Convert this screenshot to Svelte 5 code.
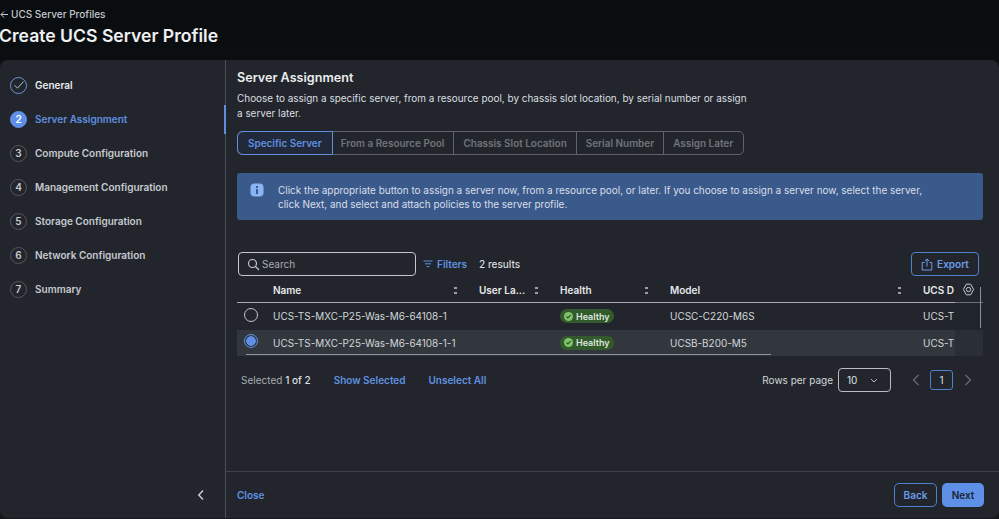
<script>
  const steps = [
    ['2', 'Server Assignment', 'active'],
    ['3', 'Compute Configuration', ''],
    ['4', 'Management Configuration', ''],
    ['5', 'Storage Configuration', ''],
    ['6', 'Network Configuration', ''],
    ['7', 'Summary', '']
  ];
  const tabs = ['Specific Server', 'From a Resource Pool', 'Chassis Slot Location', 'Serial Number', 'Assign Later'];
  const rows = [
    { name: 'UCS-TS-MXC-P25-Was-M6-64108-1', model: 'UCSC-C220-M6S', sel: false },
    { name: 'UCS-TS-MXC-P25-Was-M6-64108-1-1', model: 'UCSB-B200-M5', sel: true }
  ];
</script>

<div class="page">
  <header class="top">
    <div class="crumb"><svg width="9" height="9" viewBox="0 0 9 9"><path d="M8 4.5H1.2M4 1.5L1 4.5l3 3" fill="none" stroke="#c8ccd0" stroke-width="1"/></svg><span>UCS Server Profiles</span></div>
    <h1>Create UCS Server Profile</h1>
  </header>

  <div class="card">
    <aside class="side">
      <nav class="steps">
        <div class="step done">
          <span class="dot"><svg width="12" height="10" viewBox="0 0 12 10"><path d="M1.5 5.2L4.5 8.2L10.5 1.5" fill="none" stroke="#b6c2d4" stroke-width="1"/></svg></span>
          <span>General</span>
        </div>
        {#each steps as s}
          <div class="step {s[2]}"><span class="dot">{s[0]}</span><span>{s[1]}</span></div>
        {/each}
      </nav>
      <div class="collapse"><svg width="8" height="12" viewBox="0 0 8 12"><path d="M6 1.5L1.8 6L6 10.5" fill="none" stroke="#c8ccd0" stroke-width="1.5"/></svg></div>
      <i class="marker"></i>
    </aside>

    <main class="main">
      <div class="body">
        <h2>Server Assignment</h2>
        <p class="lead">Choose to assign a specific server, from a resource pool, by chassis slot location, by serial number or assign a server later.</p>

        <div class="tabs">
          {#each tabs as t, i}
            <button class:on={i === 0}>{t}</button>
          {/each}
        </div>

        <div class="info">
          <svg class="info-i" width="14" height="14" viewBox="0 0 14 14"><rect x="0.5" y="0.5" width="13" height="13" rx="4" fill="#8ab4f2"/><rect x="6" y="6" width="2" height="5" fill="#3c5c8f"/><rect x="6" y="3" width="2" height="2" fill="#3c5c8f"/></svg>
          <div class="info-text">Click the appropriate button to assign a server now, from a resource pool, or later. If you choose to assign a server now, select the server, click Next, and select and attach policies to the server profile.</div>
        </div>

        <div class="toolbar">
          <div class="search">
            <svg width="13" height="13" viewBox="0 0 13 13"><circle cx="5.5" cy="5.5" r="4" fill="none" stroke="#c8ccd0" stroke-width="1.1"/><path d="M8.5 8.5L12 12" stroke="#c8ccd0" stroke-width="1.1"/></svg>
            <span>Search</span>
          </div>
          <div class="filters">
            <svg width="10" height="8" viewBox="0 0 10 8"><path d="M0.5 1h9M2 3.8h6M3.6 6.6h2.8" stroke="#5b8ee0" stroke-width="1"/></svg>
            <span>Filters</span>
          </div>
          <span class="count">2 results</span>
          <button class="export">
            <svg width="12" height="13" viewBox="0 0 12 13"><path d="M3.5 4.5H1.2v7.5h9.6V4.5H8.5M6 8.5V1M3.8 3L6 1l2.2 2" fill="none" stroke="#6a9be8" stroke-width="1"/></svg>
            <span>Export</span>
          </button>
        </div>

        <div class="table">
          <div class="row head">
            <span class="c-sel"></span>
            <span class="c-name">Name<em class="sort"></em></span>
            <span class="c-label">User La...<em class="sort"></em></span>
            <span class="c-health">Health<em class="sort"></em></span>
            <span class="c-model">Model<em class="sort"></em></span>
            <span class="c-dom">UCS D</span>
          </div>
          {#each rows as r}
            <div class="row item" class:sel={r.sel}>
              <span class="c-sel"><i class="radio" class:checked={r.sel}></i></span>
              <span class="c-name">{r.name}</span>
              <span class="c-label"></span>
              <span class="c-health"><span class="badge"><svg width="9" height="9" viewBox="0 0 9 9"><circle cx="4.5" cy="4.5" r="4.5" fill="#7fc36a"/><path d="M2.5 4.6l1.4 1.4 2.6-2.8" fill="none" stroke="#25471f" stroke-width="1.1"/></svg>Healthy</span></span>
              <span class="c-model">{r.model}</span>
              <span class="c-dom">UCS-T</span>
            </div>
          {/each}
          <i class="shade"></i>
          <svg class="gear" width="13" height="13" viewBox="0 0 13 13"><path d="M4.3 1.2h4.4l2.9 5.3-2.9 5.3H4.3L1.4 6.5z" fill="none" stroke="#c8ccd0" stroke-width="1"/><circle cx="6.5" cy="6.5" r="2.2" fill="none" stroke="#c8ccd0" stroke-width="1"/></svg>
          <i class="vscroll"></i>
          <i class="hscroll"></i>
        </div>

        <div class="pager">
          <span class="selected">Selected <b>1 of 2</b></span>
          <a class="link first">Show Selected</a>
          <a class="link">Unselect All</a>
          <span class="rpp">Rows per page</span>
          <div class="select"><span>10</span><svg width="8" height="5" viewBox="0 0 8 5"><path d="M1 1l3 3 3-3" fill="none" stroke="#b4b9be" stroke-width="1"/></svg></div>
          <svg class="arr" width="8" height="12" viewBox="0 0 8 12"><path d="M6.5 1L1.5 6l5 5" fill="none" stroke="#666c73" stroke-width="1.2"/></svg>
          <span class="page-no">1</span>
          <svg class="arr" width="8" height="12" viewBox="0 0 8 12"><path d="M1.5 1l5 5-5 5" fill="none" stroke="#666c73" stroke-width="1.2"/></svg>
        </div>
      </div>

      <footer class="foot">
        <a class="close">Close</a>
        <button class="back">Back</button>
        <button class="next">Next</button>
      </footer>
    </main>
  </div>
</div>

<style>
  :global(body) { margin: 0; background: #0d1013; }
  .page {
    width: 999px; height: 519px; overflow: hidden; display: flex; flex-direction: column;
    font-family: Inter, "Liberation Sans", sans-serif; color: #e3e5e8; font-size: 10px;
    background: linear-gradient(#0a0d10, #14171b);
  }
  .top { height: 60px; flex: none; box-sizing: border-box; padding-top: 8px; }
  .crumb { display: flex; align-items: center; gap: 2px; font-size: 10px; line-height: 13px; color: #c4c8cc; font-weight: 500; }
  h1 { margin: 3px 0 0 -1px; font-size: 17.6px; line-height: 24px; font-weight: 600; color: #eef0f2; letter-spacing: 0; }
  .card { flex: 1; display: flex; background: #22262c; border-radius: 8px; min-height: 0; margin-bottom: 1px; }
  .side { width: 225px; flex: none; position: relative; border-right: 1px solid #4a4f55; display: flex; flex-direction: column; }
  .steps { padding: 16px 0 0 10px; display: flex; flex-direction: column; gap: 16px; }
  .step { display: flex; align-items: center; gap: 8px; height: 18px; font-size: 10px; font-weight: 600; color: #c6cacf; }
  .step.done { color: #e9ebee; }
  .step.active { color: #5f90e0; }
  .dot {
    width: 15px; height: 15px; border-radius: 50%; border: 1px solid #53585f; display: flex; align-items: center; justify-content: center;
    font-size: 10px; font-weight: 600; color: #c6cacf; flex: none;
  }
  .done .dot { border-color: #6b93d2; }
  .active .dot { background: #5f90e8; border-color: #5f90e8; color: #fff; }
  .collapse { margin-top: auto; margin-bottom: 17px; display: flex; justify-content: flex-end; padding-right: 20px; }
  .marker { position: absolute; right: -1px; top: 45px; width: 2px; height: 29px; background: #5f8fdc; }

  .main { flex: 1; display: flex; flex-direction: column; min-width: 0; }
  .body { flex: 1; padding: 9px 16px 0 11px; min-height: 0; }
  h2 { margin: 0; font-size: 12.6px; line-height: 17px; font-weight: 600; color: #eceef0; }
  .lead { margin: 5px 0 0; width: 514px; font-size: 9.95px; line-height: 15px; color: #dcdfe2; }
  .tabs { display: flex; margin-top: 10px; height: 24px; width: max-content; box-sizing: border-box; border: 1px solid #5e6369; border-radius: 5px; }
  .tabs button {
    background: none; border: 0; border-right: 1px solid #5e6369; font: 600 9.95px Inter, "Liberation Sans", sans-serif; color: #6f747a; padding: 0 9px; white-space: nowrap;
  }
  .tabs button:last-child { border-right: 0; padding-right: 10px; }
  .tabs button.on { color: #5f90e0; outline: 1px solid #5f8fdc; border-radius: 5px 0 0 5px; border-right: 0; padding: 0 10px; background: #22293a; }
  .info {
    margin-top: 18px; height: 47px; box-sizing: border-box; background: #3b5a8c; border-radius: 3px; display: flex; gap: 14px; padding: 10px 14px 10px 13px;
    font-size: 9.95px; line-height: 14px; color: #d9dfe8; width: 746px;
  }
  .info-i { flex: none; }
  .info-text { width: 660px; }
  .toolbar { display: flex; align-items: center; margin-top: 32px; height: 24px; }
  .search { width: 178px; height: 24px; box-sizing: border-box; border: 1px solid #c4c8cc; border-radius: 4px; display: flex; align-items: center; gap: 2px; padding: 0 8px; color: #a6abb1; margin-left: 1px; }
  .filters { display: flex; align-items: center; gap: 4px; margin-left: 7px; color: #5f90e0; font-weight: 600; }
  .count { margin-left: 12px; color: #d8dbdf; font-weight: 500; }
  .export {
    margin-left: auto; width: 68px; height: 24px; border: 1px solid #4f80cc; border-radius: 4px; background: none; color: #6a9be8;
    font: 600 10px Inter, "Liberation Sans", sans-serif; display: flex; align-items: center; justify-content: center; gap: 4px; padding: 0; margin-right: 4px;
  }
  .table { position: relative; margin-top: 2px; width: 746px; overflow: hidden; font-size: 9.95px; }
  .row { display: flex; align-items: center; white-space: nowrap; }
  .head { height: 25px; box-sizing: border-box; font-weight: 600; color: #e6e8eb; border-bottom: 1px solid #a9adb1; font-size: 10px; }
  .item { height: 26.5px; color: #d3d6da; box-sizing: border-box; }
  .item.sel { background: #32373d; }
  .row > span { display: block; position: relative; flex: none; box-sizing: border-box; }
  .c-sel { width: 36px; }
  .c-name { width: 206px; }
  .c-label { width: 81px; }
  .c-health { width: 110px; }
  .c-model { width: 253px; }
  .c-dom { width: 60px; }
  .sort { position: absolute; top: 50%; margin-top: -3px; right: 22px; width: 3px; height: 7px;
    background: linear-gradient(#9ba0a6 0 2px, transparent 2px 5px, #9ba0a6 5px); }
  .radio { display: block; margin: -3px 0 0 7px; width: 14px; height: 14px; box-sizing: border-box; border-radius: 50%; border: 1px solid #c2c6ca; }
  .radio.checked { border-color: #5f90e8; background: radial-gradient(circle, #5f90e8 0 4.5px, transparent 5px); }
  .badge { display: inline-flex; align-items: center; gap: 3px; height: 14px; padding: 0 4px; border-radius: 7px; background: #335a2d; color: #dfe6dc; font-size: 9px; font-weight: 600; }
  .shade { position: absolute; left: 718px; top: 0; width: 28px; height: 78px; background: rgba(34, 38, 44, 0.45); }
  .gear { position: absolute; right: 8px; top: 5px; }
  .vscroll { position: absolute; right: 2px; top: 9px; width: 1px; height: 41px; background: #8b9096; }
  .hscroll { position: absolute; left: 9px; top: 76px; width: 525px; height: 1px; background: #8f9398; }
  .pager { display: flex; align-items: center; height: 24px; margin-top: 12px; padding-left: 4px; width: 742px; box-sizing: border-box; font-size: 10px; }
  .selected { color: #a7abb0; }
  .selected b { font-weight: 500; color: #dcdfe2; }
  .link { color: #5f90e0; font-weight: 600; margin-left: 23px; }
  .rpp { margin-left: auto; color: #d3d6da; margin-right: 5px; }
  .select { width: 53px; height: 24px; box-sizing: border-box; border: 1px solid #b9bdc2; border-radius: 4px; display: flex; align-items: center; justify-content: space-between; padding: 0 12px 0 8px; color: #dfe1e4; margin-right: 21px; }
  .page-no { width: 23px; height: 20px; box-sizing: border-box; border: 1px solid #4f80cc; border-radius: 3px; display: flex; align-items: center; justify-content: center; margin: 0 11px 0 10px; color: #dfe1e4; }
  .arr { flex: none; }
  .pager .arr:last-child { margin-right: 7px; }
  .foot { height: 47px; flex: none; box-sizing: border-box; border-top: 1px solid #3d4248; display: flex; align-items: center; padding: 0 15px 0 11px; gap: 5px; }
  .close { color: #5f90e0; font-weight: 600; font-size: 10px; margin-right: auto; }
  .foot button { height: 24px; border-radius: 5px; font: 600 10px Inter, "Liberation Sans", sans-serif; padding: 0; }
  .back { width: 43px; background: none; border: 1px solid #4f80cc; color: #6a9be8; }
  .next { width: 42px; background: #5f90e8; border: 0; color: #1c2430; }
</style>
